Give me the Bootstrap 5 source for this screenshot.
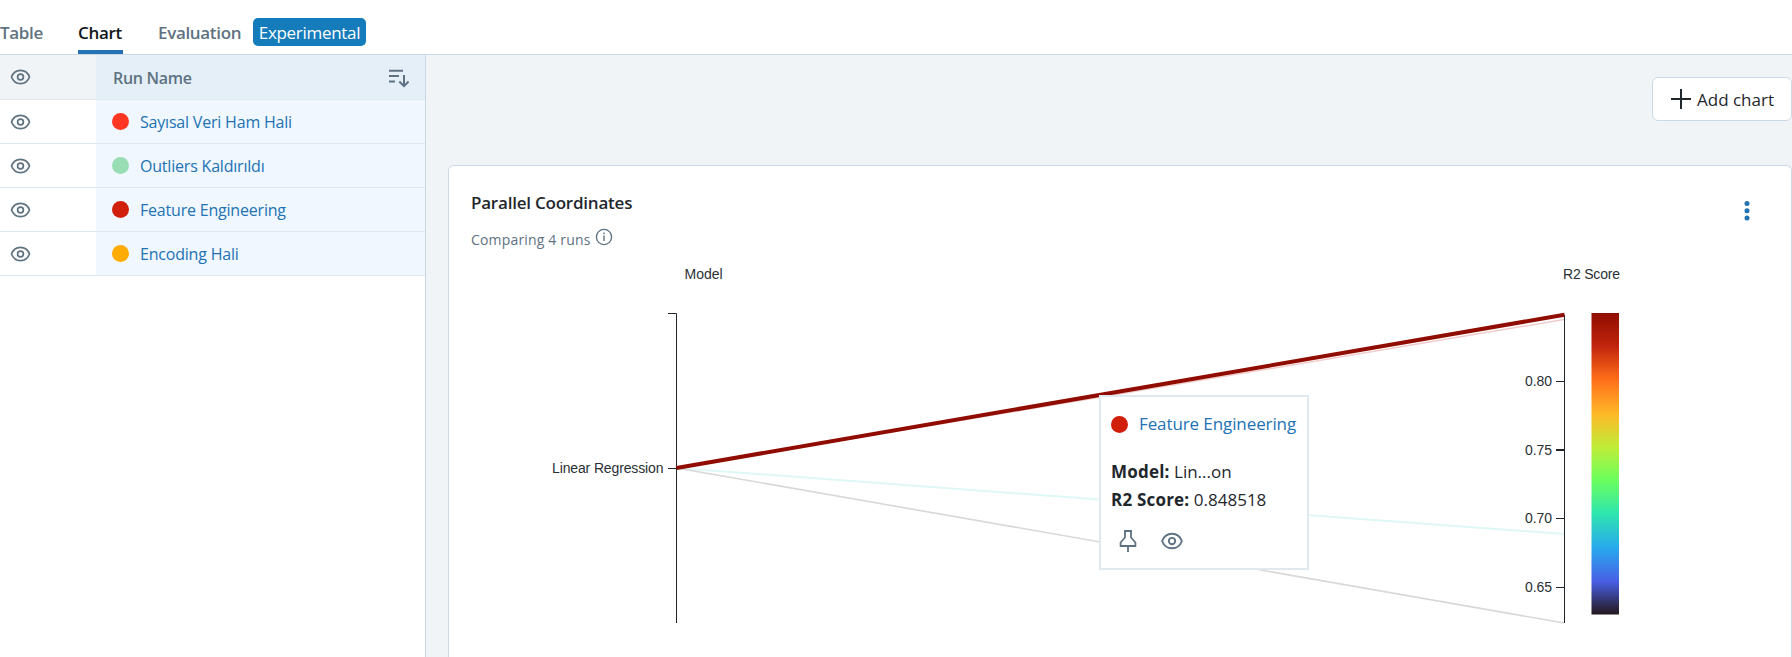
<!DOCTYPE html>
<html lang="tr">
<head>
<meta charset="utf-8">
<meta name="viewport" content="width=device-width, initial-scale=1">
<title>Runs</title>
<link href="https://cdn.jsdelivr.net/npm/bootstrap@5.3.0/dist/css/bootstrap.min.css" rel="stylesheet">
<style>
body{font-family:"Open Sans","Noto Sans",sans-serif;font-size:16px;color:#1f272d;height:657px;overflow:hidden;line-height:24px}
.fw-semi{font-weight:600}
.tabs{height:55px;border-bottom:1px solid #cbd8e6;padding-top:15px;line-height:36px;font-size:17px;letter-spacing:-.33px;color:#5f7281}
.tabs a{color:inherit;text-decoration:none;height:39px;display:block;white-space:nowrap}
.tabs .active{color:#11171c;border-bottom:4px solid #2272b4}
.t1{width:42px;margin-right:36px}.t2{width:45px;margin-right:35px}.t3{width:84px;margin-right:11px}
.exp{background:#157cbc;color:#fff;height:28px;width:113px;margin-top:3px;border-radius:5px;line-height:29px;letter-spacing:-.3px;white-space:nowrap}
.runs{width:426px;border-right:1px solid #cbd8e6}
.run{height:44px;border-bottom:1px solid #e0e8ef}
.run.head{height:45px;background:#f0f4f7;color:#5f7281}
.eyecell{width:96px;padding-left:10px;color:#5f7281}
.namecell{background:#f0f7fe;padding-left:16px;color:#2272b4;white-space:nowrap;letter-spacing:-.2px}
.head .namecell{background:#e4eff8;color:#5f7281;padding:2px 16px 0 17px;letter-spacing:-.28px}
.dot{width:17px;height:17px;border-radius:50%;flex:none;margin-right:11px}
.pane{background:#f0f4f7;padding-left:22px}
.add{width:140px;height:44px;margin:22px 0 44px auto;background:#fff;border:1px solid #cbd8e6;border-radius:6px;padding:2px 0 0 17px;font-size:17px;color:#1f272d;white-space:nowrap}
.add svg{margin-top:-2px}
.add span{margin-left:5px}
.panel{background:#fff;border:1px solid #cbd8e6;border-radius:6px 6px 0 0;border-bottom:0;height:492px;padding:24px 0 0 22px}
.title{font-size:17px;letter-spacing:-.22px;line-height:26px}
.cmp{font-size:14px;color:#5f7281;line-height:26px;margin-top:11px;height:24px;letter-spacing:.17px}
.cmp svg{margin-top:1px}
.menu{right:41px;top:34px;color:#2272b4}
.plot{display:block;margin-left:-22px}
.plot text{font:14px "Liberation Sans",Arial,sans-serif;fill:#2a3036}
.tip{left:650px;top:229px;width:210px;height:175px;background:#fff;border:2px solid #e0e8f0;padding:15px 0 0 10px;white-space:nowrap;font-size:17px}
.tip b{letter-spacing:.2px}
.tip a{color:#2272b4;text-decoration:none;letter-spacing:-.1px}
.icons{color:#5f7281;margin:17px 0 0 8px;gap:24px}
svg{flex:none}
</style>
</head>
<body class="d-flex flex-column">
<svg width="0" height="0" class="position-absolute"><defs>
<symbol id="eye" viewBox="0 0 20 16"><g fill="none" stroke="currentColor" stroke-width="1.7"><path d="M1 8C2.6 3.7 6 1.4 10 1.4S17.4 3.7 19 8c-1.6 4.300-5 6.600-9 6.600S2.600 12.300 1 8z"/><circle cx="10" cy="8" r="2.900"/></g></symbol>
<linearGradient id="turbo" x1="0" y1="0" x2="0" y2="1"><stop offset="0" stop-color="#900c00"/><stop offset=".11" stop-color="#c1250c"/><stop offset=".22" stop-color="#ff6e1a"/><stop offset=".335" stop-color="#ffb927"/><stop offset=".445" stop-color="#bfed38"/><stop offset=".555" stop-color="#6aff5d"/><stop offset=".665" stop-color="#2ee5ae"/><stop offset=".78" stop-color="#28a9ee"/><stop offset=".89" stop-color="#485fe5"/><stop offset="1" stop-color="#23171b"/></linearGradient>
</defs></svg>
<nav class="tabs d-flex fw-semi flex-shrink-0">
<a class="t1" href="#">Table</a><a class="t2 active" href="#">Chart</a><a class="t3" href="#">Evaluation</a><span class="exp fw-normal text-center">Experimental</span>
</nav>
<main class="d-flex flex-grow-1">
<section class="runs flex-shrink-0">
<div class="run head d-flex"><div class="eyecell d-flex align-items-center"><svg width="21" height="16"><use href="#eye"/></svg></div>
<div class="namecell flex-grow-1 d-flex align-items-center justify-content-between fw-semi"><span>Run Name</span>
<svg width="20" height="19" viewBox="0 0 20 19" fill="none" stroke="currentColor" stroke-width="2"><path d="M0 1.700H14M0 7H10M0 12.500H6M15 6V17M10.300 12.500L15 17.200L19.600 12.500"/></svg></div></div>
<div class="run d-flex"><div class="eyecell d-flex align-items-center"><svg width="21" height="16"><use href="#eye"/></svg></div><div class="namecell flex-grow-1 d-flex align-items-center"><span class="dot" style="background:#ff3621"></span><span>Sayısal Veri Ham Hali</span></div></div>
<div class="run d-flex"><div class="eyecell d-flex align-items-center"><svg width="21" height="16"><use href="#eye"/></svg></div><div class="namecell flex-grow-1 d-flex align-items-center"><span class="dot" style="background:#99ddb4"></span><span>Outliers Kaldırıldı</span></div></div>
<div class="run d-flex"><div class="eyecell d-flex align-items-center"><svg width="21" height="16"><use href="#eye"/></svg></div><div class="namecell flex-grow-1 d-flex align-items-center"><span class="dot" style="background:#d01f0b"></span><span>Feature Engineering</span></div></div>
<div class="run d-flex"><div class="eyecell d-flex align-items-center"><svg width="21" height="16"><use href="#eye"/></svg></div><div class="namecell flex-grow-1 d-flex align-items-center"><span class="dot" style="background:#ffab00"></span><span>Encoding Hali</span></div></div>
</section>
<section class="pane flex-grow-1">
<button class="add d-flex align-items-center"><svg width="22" height="22" viewBox="0 0 22 22" stroke="#1f272d" stroke-width="2"><path d="M1 11H21M11 1V21"/></svg><span>Add chart</span></button>
<article class="panel position-relative">
<div class="title fw-semi">Parallel Coordinates</div>
<div class="cmp d-flex"><span>Comparing 4 runs</span><svg class="ms-1" width="18" height="18" viewBox="0 0 18 18" fill="none" stroke="currentColor" stroke-width="1.400"><circle cx="9" cy="9" r="7.600"/><path d="M9 7.500V13M9 4.600V6.200"/></svg></div>
<svg class="menu position-absolute" width="6" height="22" fill="currentColor"><circle cx="3" cy="3.500" r="2.500"/><circle cx="3" cy="10.800" r="2.500"/><circle cx="3" cy="18.100" r="2.500"/></svg>
<svg class="plot" width="1342" height="406" viewBox="449 251 1342 406">
<text x="684.500" y="279" textLength="38">Model</text><text x="1563" y="279" textLength="57">R2 Score</text>
<g fill="none"><path d="M676.500 468L1564 319.500" stroke="#f1cccb" stroke-width="1.500"/><path d="M676.500 468L1564 534" stroke="#dff8f6" stroke-width="2"/><path d="M676.500 468L1564 623" stroke="#d8d8d8" stroke-width="1.600"/>
<path d="M668 313.500H676.500V623M668 468.500H676M1564.500 315V623M1556 381.500H1564M1556 518.500H1564M1556 587.500H1564" stroke="#20252a"/><path d="M1556 450H1564" stroke="#20252a" stroke-width="2"/>
<path d="M676.500 468L1564.500 314.700" stroke="#900c00" stroke-width="4"/></g>
<text x="552" y="473" textLength="111.500">Linear Regression</text>
<text x="1525" y="386" textLength="27">0.80</text><text x="1525" y="455" textLength="27">0.75</text><text x="1525" y="523" textLength="27">0.70</text><text x="1525" y="592" textLength="27">0.65</text>
<rect x="1591.500" y="313" width="27.500" height="301.500" fill="url(#turbo)"/>
</svg>
<div class="tip position-absolute">
<div class="d-flex align-items-center"><span class="dot" style="background:#d01f0b"></span><a href="#">Feature Engineering</a></div>
<div class="mt-4"><div><b>Model:</b> Lin...on</div><div class="mt-1"><b>R2 Score:</b> 0.848518</div></div>
<div class="icons d-flex align-items-center">
<svg width="18" height="24" viewBox="0 0 18 24" fill="none" stroke="currentColor" stroke-width="1.800"><path d="M5 2H13M6 2V8.500L1.600 13.500V17H16.400V13.500L12 8.500V2M9 17V23"/></svg>
<svg width="22" height="18"><use href="#eye"/></svg>
</div></div>
</article>
</section>
</main>
<script src="https://cdn.jsdelivr.net/npm/bootstrap@5.3.0/dist/js/bootstrap.bundle.min.js"></script>
</body>
</html>
